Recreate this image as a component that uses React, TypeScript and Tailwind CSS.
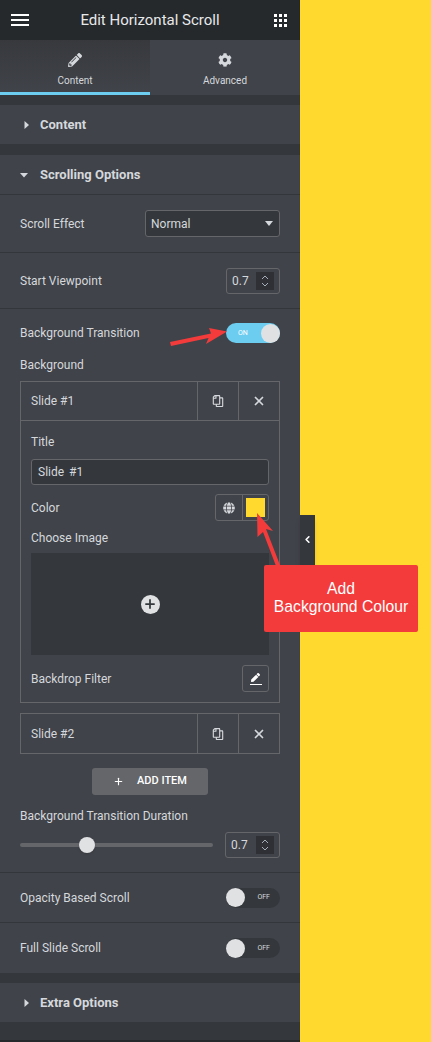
import { X, Plus, ChevronLeft } from "lucide-react";
import { FaCog, FaGlobe, FaPen, FaPencilAlt, FaRegCopy } from "react-icons/fa";

const font = { fontFamily: "Roboto, sans-serif" };

function Section({ label, open, bordered }: { label: string; open?: boolean; bordered?: boolean }) {
  return (
    <div className={`bg-[#404349] flex items-center pl-[20px] ${bordered ? "border-b border-[#33363a] h-[40px]" : "h-[39px]"}`}>
      <svg width="20" height="10" viewBox="0 0 20 10" className="text-[#d5d8dc]" fill="currentColor">
        {open ? <path d="M0 3h8L4 7.5z" /> : <path d="M4.5 1L9 5 4.5 9z" />}
      </svg>
      <span className="text-[13px] font-bold text-[#d5d8dc]">{label}</span>
    </div>
  );
}

function NumberBox({ width }: { width: string }) {
  return (
    <div className={`h-[26px] ${width} border border-[#64666a] rounded-[3px] flex items-center justify-between pl-[5px] pr-[5px]`}>
      <span className="text-[12px] text-[#d5d8dc]">0.7</span>
      <div className="w-[18px] h-[18px] bg-[#2f3035] flex flex-col items-center justify-center gap-[2px]">
        <svg width="8" height="5" viewBox="0 0 8 5" fill="none" stroke="#a4afb7"><path d="M1 4l3-3 3 3" /></svg>
        <svg width="8" height="5" viewBox="0 0 8 5" fill="none" stroke="#a4afb7"><path d="M1 1l3 3 3-3" /></svg>
      </div>
    </div>
  );
}

function Toggle({ on }: { on?: boolean }) {
  return on ? (
    <div className="w-[54px] h-[20px] rounded-full bg-[#6ccdf0] flex items-center justify-between pl-[12px] pr-0">
      <span className="text-[7px] text-white">ON</span>
      <div className="w-[19px] h-[19px] rounded-full bg-[#e0e1e3]" />
    </div>
  ) : (
    <div className="w-[54px] h-[20px] rounded-full bg-[#34383c] flex items-center justify-between pr-[10px]">
      <div className="w-[19px] h-[19px] rounded-full bg-[#e0e1e3]" />
      <span className="text-[7px] text-[#d5d8dc]">OFF</span>
    </div>
  );
}

function SlideHeader({ label, bordered }: { label: string; bordered?: boolean }) {
  return (
    <div className={`h-[39px] flex items-center text-[#d5d8dc] ${bordered ? "border-b border-[#64666a]" : ""}`}>
      <span className="flex-1 pl-[10px] text-[12px]">{label}</span>
      <div className="w-[41px] h-full border-l border-[#64666a] flex items-center justify-center">
        <FaRegCopy size={12} className="scale-x-[-1]" />
      </div>
      <div className="w-[41px] h-full border-l border-[#64666a] flex items-center justify-center">
        <X size={14} strokeWidth={3} />
      </div>
    </div>
  );
}

export default function App() {
  return (
    <div className="relative w-[431px] h-[1042px] bg-[#ffd92e] overflow-hidden" style={font}>
      <aside className="w-[300px] h-full bg-[#34383c] flex flex-col">
        <header className="h-[40px] bg-[#26292c] flex items-center justify-between pl-[11px] pr-[13px]">
          <div className="w-[18px] flex flex-col gap-[3px]">
            <span className="h-[2px] bg-white" />
            <span className="h-[2px] bg-white" />
            <span className="h-[2px] bg-white" />
          </div>
          <span className="text-[15px] text-[#e6e8ea] mr-[3px]">Edit Horizontal Scroll</span>
          <div className="grid grid-cols-3 gap-[2px]">
            {Array.from({ length: 9 }).map((_, i) => (
              <span key={i} className="w-[3px] h-[3px] bg-white" />
            ))}
          </div>
        </header>

        <div className="h-[55px] flex">
          <div className="w-[150px] bg-gradient-to-b from-[#37393d] to-[#404349] border-b-[3px] border-[#6ccdf0] flex flex-col items-center pt-[13px] text-[#d5d8dc]">
            <FaPencilAlt size={14} />
            <span className="text-[10px] mt-[6px]">Content</span>
          </div>
          <div className="w-[150px] bg-[#404349] flex flex-col items-center pt-[13px] text-[#d5d8dc]">
            <FaCog size={14} />
            <span className="text-[10px] mt-[6px]">Advanced</span>
          </div>
        </div>

        <div className="mt-[10px]">
          <Section label="Content" />
        </div>
        <div className="mt-[11px]">
          <Section label="Scrolling Options" open bordered />
        </div>

        <div className="bg-[#404349] text-[#d5d8dc] text-[12px]">
          <div className="h-[58px] px-[20px] flex items-center justify-between border-b border-[#33363a]">
            <span>Scroll Effect</span>
            <div className="w-[135px] h-[27px] bg-[#34383c] border border-[#64666a] rounded-[3px] flex items-center justify-between pl-[5px] pr-[6px]">
              <span>Normal</span>
              <svg width="8" height="5" viewBox="0 0 8 5" fill="#d5d8dc"><path d="M0 0h8L4 5z" /></svg>
            </div>
          </div>
          <div className="h-[56px] px-[20px] flex items-center justify-between border-b border-[#33363a]">
            <span>Start Viewpoint</span>
            <NumberBox width="w-[54px]" />
          </div>

          <div className="px-[20px] pt-[14px] pb-[14px] border-b border-[#33363a]">
            <div className="h-[20px] flex items-center justify-between">
              <span>Background Transition</span>
              <Toggle on />
            </div>
            <div className="mt-[15px] h-[14px] leading-[14px]">Background</div>

            <div className="mt-[9px] border border-[#64666a]">
              <SlideHeader label="Slide #1" bordered />
              <div className="px-[10px] pt-[14px] pb-[10px]">
                <div className="h-[14px] leading-[14px]">Title</div>
                <div className="mt-[10px] h-[26px] bg-[#34383c] border border-[#64666a] rounded-[3px] flex items-center pl-[6px] [word-spacing:2px]">
                  Slide #1
                </div>
                <div className="mt-[9px] h-[27px] flex items-center justify-between">
                  <span>Color</span>
                  <div className="w-[54px] h-[27px] border border-[#64666a] rounded-[3px] flex">
                    <div className="w-[27px] border-r border-[#64666a] flex items-center justify-center">
                      <FaGlobe size={12} />
                    </div>
                    <div className="flex-1 p-[3px]">
                      <div className="w-full h-full bg-[#ffd92e]" />
                    </div>
                  </div>
                </div>
                <div className="mt-[10px] h-[14px] leading-[14px]">Choose Image</div>
                <div className="mt-[8px] h-[102px] bg-[#34383c] flex items-center justify-center">
                  <div className="w-[19px] h-[19px] rounded-full bg-[#e0e1e3] flex items-center justify-center">
                    <Plus size={14} strokeWidth={3} className="text-[#34383c]" />
                  </div>
                </div>
                <div className="mt-[10px] h-[27px] flex items-center justify-between">
                  <span>Backdrop Filter</span>
                  <div className="w-[27px] h-[27px] border border-[#64666a] rounded-[3px] flex flex-col items-center justify-center">
                    <FaPen size={9} className="text-white" />
                    <span className="w-[12px] h-[1px] bg-white mt-[2px]" />
                  </div>
                </div>
              </div>
            </div>

            <div className="mt-[10px] border border-[#64666a]">
              <SlideHeader label="Slide #2" />
            </div>

            <div className="mt-[14px] flex justify-center">
              <div className="w-[116px] h-[27px] bg-[#64666a] rounded-[3px] flex items-center justify-center text-white text-[11px] font-medium">
                <Plus size={11} strokeWidth={2.5} className="mr-[13px]" />
                ADD ITEM
              </div>
            </div>

            <div className="mt-[14px] h-[14px] leading-[14px]">Background Transition Duration</div>
            <div className="mt-[9px] h-[26px] flex items-center justify-between">
              <div className="relative w-[193px] h-[4px] rounded-full bg-[#64666a]">
                <div className="absolute left-[59px] top-[-6px] w-[16px] h-[16px] rounded-full bg-[#e0e1e3] shadow" />
              </div>
              <NumberBox width="w-[55px]" />
            </div>
          </div>

          <div className="h-[50px] px-[20px] flex items-center justify-between border-b border-[#33363a]">
            <span>Opacity Based Scroll</span>
            <Toggle />
          </div>
          <div className="h-[50px] px-[20px] flex items-center justify-between">
            <span>Full Slide Scroll</span>
            <Toggle />
          </div>
        </div>

        <div className="mt-[10px]">
          <Section label="Extra Options" />
        </div>
        <div className="mt-auto h-[2px] bg-[#26292c]" />
      </aside>

      {/* collapse handle */}
      <div className="absolute left-[300px] top-[515px] w-[15px] h-[52px] bg-[#34383c] shadow-md flex items-center justify-center pb-[3px] text-white">
        <ChevronLeft size={11} strokeWidth={3.5} />
      </div>

      {/* annotations */}
      <svg className="absolute left-0 top-0 pointer-events-none" width="431" height="1042" fill="#f33b3b">
        <path d="M170 342L211 333.5 209 328 227 331.5 206 344 208.5 338 171 346z" />
        <path d="M257 513L273 531 266 529 280 565 276 566 263 532 257.5 537z" />
      </svg>
      <div
        className="absolute left-[264px] top-[565px] w-[154px] h-[67px] bg-[#f33b3b] rounded-[2px] flex items-center justify-center text-center text-white text-[15.7px] leading-[18px] pb-[2px]"
        style={{ fontFamily: "'Liberation Sans', sans-serif" }}
      >
        Add
        <br />
        Background Colour
      </div>
    </div>
  );
}
